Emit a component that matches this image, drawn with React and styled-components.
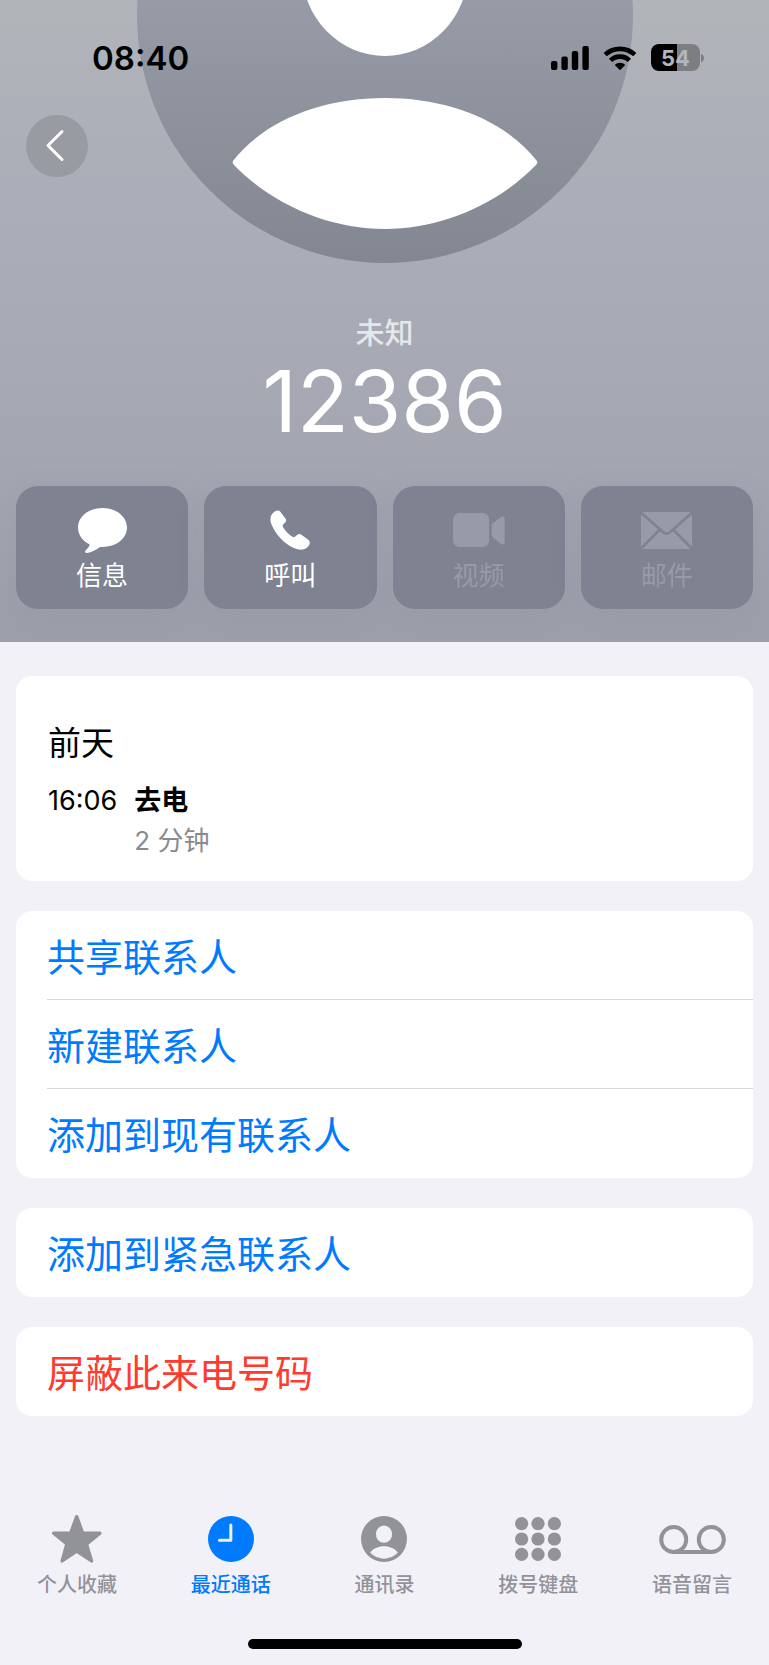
import React from "react";
import styled, { createGlobalStyle } from "styled-components";

const GlobalStyle = createGlobalStyle`
  * { box-sizing: border-box; }
  body {
    margin: 0;
    background: #f2f1f8;
    font-family: Inter, "Noto Sans CJK SC", sans-serif;
    color: #000;
  }
  button {
    border: 0;
    padding: 0;
    background: none;
    font: inherit;
    color: inherit;
  }
  svg { display: block; }
`;

const Page = styled.div`
  display: flex;
  flex-direction: column;
  min-height: 100vh;
`;

const Hero = styled.header`
  position: relative;
  overflow: hidden;
  padding: 0 16px 33px;
  background: linear-gradient(#b1b4b8 0%, #adb0b9 20%, #a9abb7 44%, #a3a5b1 75%, #9c9eaa 100%);
`;

const AvatarArt = styled.svg`
  position: absolute;
  top: 0;
  left: 50%;
  transform: translateX(-50%);
`;

const StatusBar = styled.div`
  position: relative;
  display: flex;
  align-items: center;
  justify-content: space-between;
  height: 115px;
  padding: 0 49px 0 76px;
`;

const Clock = styled.time`
  font-size: 33px;
  line-height: 40px;
  font-weight: 600;
`;

const StatusIcons = styled.div`
  display: flex;
  align-items: center;
  gap: 14px;
`;

const Battery = styled.div`
  display: flex;
  align-items: center;
  gap: 1px;
`;

const BatteryBody = styled.span`
  width: 49px;
  height: 27px;
  border-radius: 8px;
  background: linear-gradient(90deg, #000 54%, #7d7e82 54%);
  color: #b3b6bc;
  font-size: 22px;
  line-height: 28px;
  font-weight: 700;
  text-align: center;
`;

const BackButton = styled.button`
  position: relative;
  display: block;
  width: 62px;
  height: 62px;
  margin-left: 10px;
  border-radius: 50%;
  background: #989ba2;
  color: #fff;
`;

const Label = styled.p`
  margin: 137px 0 0;
  color: #e6e7ea;
  font-size: 29px;
  line-height: 40px;
  font-weight: 500;
  text-align: center;
`;

const PhoneNumber = styled.h1`
  margin: 0;
  color: #fff;
  font-size: 85px;
  line-height: 96px;
  font-weight: 400;
  text-align: center;
`;

const Actions = styled.div`
  display: grid;
  grid-template-columns: repeat(4, 1fr);
  gap: 16px;
  margin-top: 36px;
`;

const ActionButton = styled.button`
  display: flex;
  flex-direction: column;
  align-items: center;
  gap: 6px;
  height: 123px;
  padding-top: 20px;
  border-radius: 22px;
  background: #7f8291;
  box-shadow: 0 4px 24px rgba(127, 130, 145, 0.16);
  color: #fff;
  font-size: 26px;
  line-height: 32px;

  &:disabled { color: #979aa7; }
`;

const IconBox = styled.span`
  display: flex;
  align-items: center;
  justify-content: center;
  height: 48px;
`;

const Content = styled.main`
  display: flex;
  flex-direction: column;
  gap: 30px;
  padding: 34px 16px 32px;
`;

const Card = styled.section`
  overflow: hidden;
  border-radius: 16px;
  background: #fff;
`;

const History = styled(Card)`
  padding: 43px 32px 20px;
`;

const Day = styled.h2`
  margin: 0 0 14px;
  font-size: 33px;
  line-height: 48px;
  font-weight: 400;
`;

const Call = styled.div`
  display: flex;
  gap: 17px;
  font-size: 27px;
  line-height: 40px;
`;

const CallKind = styled.div`
  font-weight: 700;
`;

const Duration = styled.div`
  color: #8a8a8e;
  font-size: 26px;
`;

const Row = styled.button`
  display: block;
  width: 100%;
  height: 89px;
  padding-left: 31px;
  color: ${(p) => (p.$danger ? "#ff3b30" : "#007aff")};
  font-size: 38px;
  text-align: left;
`;

const RowText = styled.span`
  display: block;
  height: 89px;
  padding-top: 5px;
  line-height: 83px;
  border-bottom: 1px solid #d8d8da;

  ${Row}:last-child & { border-bottom-color: transparent; }
`;

const TabBar = styled.nav`
  display: grid;
  grid-template-columns: repeat(5, 1fr);
  margin-top: auto;
`;

const Tab = styled.a`
  display: flex;
  flex-direction: column;
  align-items: center;
  gap: 8px;
  color: ${(p) => (p.$active ? "#007aff" : "#929299")};
  font-size: 20px;
  line-height: 28px;
  font-weight: 500;
  text-decoration: none;
`;

const HomeIndicator = styled.div`
  width: 274px;
  height: 10px;
  margin: 40px auto 16px;
  border-radius: 5px;
  background: #000;
`;

const Avatar = () => (
  <AvatarArt width="497" height="264" viewBox="0 0 496 264" aria-hidden="true">
    <defs>
      <linearGradient id="avatar" x1="0" y1="0" x2="0" y2="264" gradientUnits="userSpaceOnUse">
        <stop offset="0" stopColor="#969ba7" />
        <stop offset="1" stopColor="#838791" />
      </linearGradient>
    </defs>
    <circle cx="248" cy="15" r="248" fill="url(#avatar)" />
    <ellipse cx="248" cy="-30" rx="83" ry="86" fill="#fff" />
    <path
      d="M96 161C127 121 184 98 248 98S369 121 400 161Q401 163 399 165C359 206 302 229 248 229S137 206 97 165Q95 163 96 161Z"
      fill="#fff"
    />
  </AvatarArt>
);

const SignalIcon = () => (
  <svg width="38" height="26" viewBox="0 0 38 26" aria-label="信号">
    <rect x="0" y="16" width="6.4" height="9" rx="2" />
    <rect x="10.4" y="11.5" width="6.4" height="13.5" rx="2" />
    <rect x="20.8" y="6" width="6.4" height="19" rx="2" />
    <rect x="31.4" y="1" width="6.4" height="24" rx="2" />
  </svg>
);

const WifiIcon = () => (
  <svg width="34" height="26" viewBox="0 0 34 26" aria-label="无线网络">
    <g fill="none" stroke="#000" strokeWidth="4.6">
      <path d="M2.200 9.600A22 22 0 0 1 31.800 9.600" />
      <path d="M7.6 15.4A13.500 13.500 0 0 1 26.4 15.4" />
    </g>
    <path d="M11.800 20C14.500 17 19.500 17 22.200 20L17.800 24.600Q17 25.300 16.200 24.600Z" />
  </svg>
);

const MessageIcon = () => (
  <svg width="49" height="45" viewBox="0 0 146 134" fill="currentColor" aria-hidden="true">
    <path d="M73 0C113 0 146 25 146 58S113 116 73 116H66C55 124 40 132 27 134C20 134 19 129 24 125C30 120 34 114 35 109C14 98 0 80 0 58C0 25 33 0 73 0Z" />
  </svg>
);

const CallIcon = () => (
  <svg width="40" height="40" viewBox="0 0 120 120" fill="currentColor" aria-hidden="true">
    <path d="M8 10C14 3 25-2 31 5L47 26C50 31 48 35 45 38L40 43C37 46 38 50 40 53C48 65 57 74 67 80C71 82 74 82 77 79L82 74C86 71 90 71 94 74L115 89C122 95 120 104 113 111C103 121 88 121 73 115C40 100 15 70 4 42C-1 30 1 18 8 10Z" />
  </svg>
);

const VideoIcon = () => (
  <svg width="52" height="34" viewBox="0 0 157 102" fill="currentColor" aria-hidden="true">
    <rect width="109" height="102" rx="19" />
    <path d="M117 40c0-5 1-8 5-11L145 11c5-4 11-1 11 4v74c0 5-6 8-11 4L122 75c-4-3-5-6-5-11Z" />
  </svg>
);

const MailIcon = () => (
  <svg width="51" height="37" viewBox="0 0 153 111" aria-hidden="true">
    <rect width="153" height="111" rx="8" fill="currentColor" />
    <g fill="none" stroke="#7f8291" strokeWidth="8">
      <path d="M0 2L66 60Q77 70 88 60L153 2" />
      <path d="M0 110L55 54M153 110L98 54" />
    </g>
  </svg>
);

const StarIcon = () => (
  <svg width="50" height="48" viewBox="0 0 148 142" fill="currentColor" aria-hidden="true">
    <path
      d="M73 5L91 54H142L102 86L117 136L73 107L30 136L44 86L5 54H55Z"
      stroke="currentColor"
      strokeWidth="10"
      strokeLinejoin="round"
    />
  </svg>
);

const RecentsIcon = () => (
  <svg width="46" height="46" viewBox="0 0 137 137" aria-hidden="true">
    <circle cx="68.5" cy="68.5" r="68.5" fill="currentColor" />
    <path d="M68 27V72H34" fill="none" stroke="#f2f1f8" strokeWidth="9" strokeLinecap="round" strokeLinejoin="round" />
  </svg>
);

const ContactIcon = () => (
  <svg width="46" height="46" viewBox="0 0 137 137" aria-hidden="true">
    <circle cx="68.5" cy="68.5" r="68.5" fill="currentColor" />
    <ellipse cx="68.500" cy="54" rx="24" ry="26" fill="#f2f1f8" />
    <path d="M27 109C36 97 51 90 68.500 90S101 97 110 109C100 120 85 127 68.500 127S37 120 27 109Z" fill="#f2f1f8" />
  </svg>
);

const KeypadIcon = () => (
  <svg width="46" height="44" viewBox="0 0 139 133" fill="currentColor" aria-hidden="true">
    {[20, 66.5, 113].map((y) => [20, 69.5, 119].map((x) => <circle key={x + "-" + y} cx={x} cy={y} r="20" />))}
  </svg>
);

const VoicemailIcon = () => (
  <svg width="67" height="29" viewBox="0 0 202 88" aria-hidden="true">
    <g fill="none" stroke="currentColor" strokeWidth="12">
      <circle cx="44" cy="44" r="38" />
      <circle cx="158" cy="44" r="38" />
      <path d="M44 82H158" />
    </g>
  </svg>
);

const actions = [
  { label: "信息", Icon: MessageIcon },
  { label: "呼叫", Icon: CallIcon },
  { label: "视频", Icon: VideoIcon, disabled: true },
  { label: "邮件", Icon: MailIcon, disabled: true },
];

const groups = [
  { rows: ["共享联系人", "新建联系人", "添加到现有联系人"] },
  { rows: ["添加到紧急联系人"] },
  { rows: ["屏蔽此来电号码"], danger: true },
];

const tabs = [
  { label: "个人收藏", Icon: StarIcon },
  { label: "最近通话", Icon: RecentsIcon, active: true },
  { label: "通讯录", Icon: ContactIcon },
  { label: "拨号键盘", Icon: KeypadIcon },
  { label: "语音留言", Icon: VoicemailIcon },
];

export default function App() {
  return (
    <Page lang="zh-CN">
      <GlobalStyle />
      <Hero>
        <Avatar />
        <StatusBar>
          <Clock>08:40</Clock>
          <StatusIcons>
            <SignalIcon />
            <WifiIcon />
            <Battery>
              <BatteryBody>54</BatteryBody>
              <svg width="3" height="8" viewBox="0 0 3 8" aria-hidden="true">
                <path d="M0 0Q3 1 3 4T0 8Z" fill="#7d7e82" />
              </svg>
            </Battery>
          </StatusIcons>
        </StatusBar>
        <BackButton type="button" aria-label="返回">
          <svg width="62" height="62" viewBox="0 0 62 62" aria-hidden="true">
            <path d="M36 16.500L22 30.500L36 44.500" fill="none" stroke="currentColor" strokeWidth="3" strokeLinecap="round" strokeLinejoin="round" />
          </svg>
        </BackButton>
        <Label>未知</Label>
        <PhoneNumber>12386</PhoneNumber>
        <Actions>
          {actions.map(({ label, Icon, disabled }) => (
            <ActionButton key={label} type="button" disabled={disabled}>
              <IconBox><Icon /></IconBox>
              {label}
            </ActionButton>
          ))}
        </Actions>
      </Hero>
      <Content>
        <History>
          <Day>前天</Day>
          <Call>
            <time>16:06</time>
            <div>
              <CallKind>去电</CallKind>
              <Duration>2 分钟</Duration>
            </div>
          </Call>
        </History>
        {groups.map(({ rows, danger }) => (
          <Card key={rows[0]}>
            {rows.map((text) => (
              <Row key={text} type="button" $danger={danger}>
                <RowText>{text}</RowText>
              </Row>
            ))}
          </Card>
        ))}
      </Content>
      <TabBar>
        {tabs.map(({ label, Icon, active }) => (
          <Tab key={label} href="#" $active={active} aria-current={active ? "page" : undefined}>
            <IconBox><Icon /></IconBox>
            {label}
          </Tab>
        ))}
      </TabBar>
      <HomeIndicator />
    </Page>
  );
}
